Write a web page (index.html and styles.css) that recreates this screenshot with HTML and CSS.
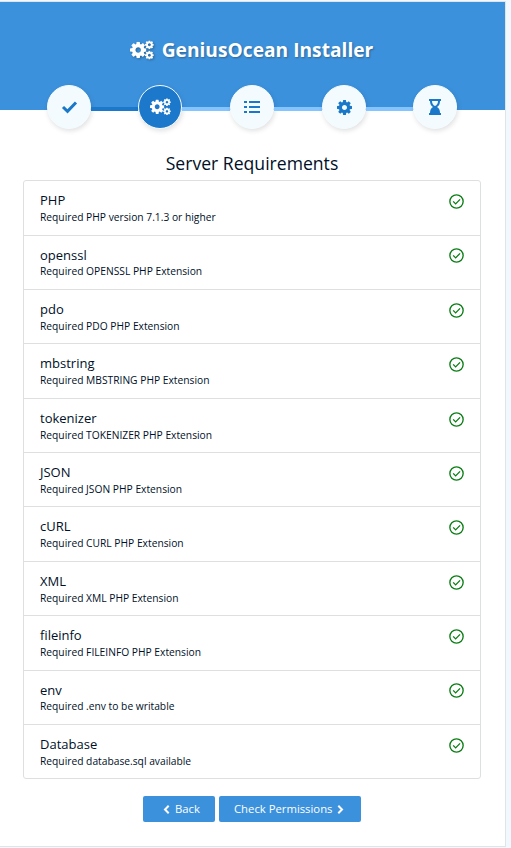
FILE: index.html
```html
<!DOCTYPE html>
<html lang="en">
<head>
<meta charset="utf-8">
<title>GeniusOcean Installer</title>
<link rel="stylesheet" href="styles.css">
</head>
<body>
<svg class="defs" aria-hidden="true">
  <symbol id="cog" viewBox="128 128 1536 1536"><path d="M1152 896q0-106-75-181t-181-75-181 75-75 181 75 181 181 75 181-75 75-181zm512-109v222q0 12-8 23t-20 13l-185 28q-19 54-39 91 35 50 107 138 10 12 10 25t-9 23q-27 37-99 108t-94 71q-12 0-26-9l-138-108q-44 23-91 38-16 136-29 186-7 28-36 28h-222q-14 0-24.500-8.500t-11.500-21.500l-28-184q-49-16-90-37l-141 107q-10 9-25 9-14 0-25-11-126-114-165-168-7-10-7-23 0-12 8-23 15-21 51-66.500t54-70.500q-27-50-41-99l-183-27q-13-2-21-12.500t-8-23.500v-222q0-12 8-23t19-13l186-28q14-46 39-92-40-57-107-138-10-12-10-24 0-10 9-23 26-36 98.500-107.500t94.500-71.500q13 0 26 10l138 107q44-23 91-38 16-136 29-186 7-28 36-28h222q14 0 24.500 8.500t11.500 21.500l28 184q49 16 90 37l142-107q9-9 24-9 13 0 25 10 129 119 165 170 7 8 7 22 0 12-8 23-15 21-51 66.500t-54 70.500q26 50 41 98l183 28q13 2 21 12.500t8 23.500z"/></symbol>
  <symbol id="cogs" viewBox="0 0 24 20">
    <use href="#cog" x="0" y="1.800" width="16.400" height="16.400"/>
    <use href="#cog" x="15" y="0.400" width="8.800" height="8.800"/>
    <use href="#cog" x="15" y="10.800" width="8.800" height="8.800"/>
  </symbol>
  <symbol id="ok" viewBox="0 0 14 14"><circle cx="7" cy="7" r="6.200"/><path d="M3.900 6.900l2.300 2.300 4.100-4.200"/></symbol>
</svg>
<main class="card">
  <header class="header"><svg class="logo"><use href="#cogs"/></svg><h1>GeniusOcean Installer</h1></header>
  <ol class="steps">
    <li class="step"><svg width="17" height="14" viewBox="0 0 17 14"><path d="M2 7l4.500 4.300L15 2.500" fill="none" stroke="currentColor" stroke-width="3"/></svg></li>
    <li class="bar done"></li>
    <li class="step active"><svg width="21" height="17.500"><use href="#cogs"/></svg></li>
    <li class="bar"></li>
    <li class="step"><svg width="16" height="14" viewBox="0 0 16 14"><path d="M0 1h3v2H0zM0 6h3v2H0zM0 11h3v2H0zM5 1h11v2H5zM5 6h11v2H5zM5 11h11v2H5z"/></svg></li>
    <li class="bar"></li>
    <li class="step"><svg width="15" height="15"><use href="#cog"/></svg></li>
    <li class="bar last"></li>
    <li class="step"><svg width="12" height="16" viewBox="0 0 12 16"><path fill-rule="evenodd" d="M0 0h12v2h-1c0 3-1 5-3 6 2 1 3 3 3 6h1v2H0v-2h1c0-3 1-5 3-6C2 7 1 5 1 2H0zM3 2c0 2.500 1 4 3 5 2-1 3-2.500 3-5z"/></svg></li>
  </ol>
  <section class="content">
    <h2>Server Requirements</h2>
    <ul class="list">
      <li><div><h3>PHP</h3><p>Required PHP version 7.1.3 or higher</p></div><svg class="ok"><use href="#ok"/></svg></li>
      <li><div><h3>openssl</h3><p>Required OPENSSL PHP Extension</p></div><svg class="ok"><use href="#ok"/></svg></li>
      <li><div><h3>pdo</h3><p>Required PDO PHP Extension</p></div><svg class="ok"><use href="#ok"/></svg></li>
      <li><div><h3>mbstring</h3><p>Required MBSTRING PHP Extension</p></div><svg class="ok"><use href="#ok"/></svg></li>
      <li><div><h3>tokenizer</h3><p>Required TOKENIZER PHP Extension</p></div><svg class="ok"><use href="#ok"/></svg></li>
      <li><div><h3>JSON</h3><p>Required JSON PHP Extension</p></div><svg class="ok"><use href="#ok"/></svg></li>
      <li><div><h3>cURL</h3><p>Required CURL PHP Extension</p></div><svg class="ok"><use href="#ok"/></svg></li>
      <li><div><h3>XML</h3><p>Required XML PHP Extension</p></div><svg class="ok"><use href="#ok"/></svg></li>
      <li><div><h3>fileinfo</h3><p>Required FILEINFO PHP Extension</p></div><svg class="ok"><use href="#ok"/></svg></li>
      <li><div><h3>env</h3><p>Required .env to be writable</p></div><svg class="ok"><use href="#ok"/></svg></li>
      <li><div><h3>Database</h3><p>Required database.sql available</p></div><svg class="ok"><use href="#ok"/></svg></li>
    </ul>
    <nav class="actions">
      <a class="btn back"><svg width="7" height="9" viewBox="0 0 7 9"><path d="M5.700 .8L2 4.500l3.700 3.700"/></svg><span>Back</span></a>
      <a class="btn next"><span>Check Permissions</span><svg width="7" height="9" viewBox="0 0 7 9"><path d="M1.300 .8L5 4.500 1.300 8.200"/></svg></a>
    </nav>
  </section>
</main>
</body>
</html>
```
FILE: styles.css
```css
* { box-sizing: border-box; }
body {
  margin: 0;
  padding-top: 1px;
  height: 848px;
  overflow: hidden;
  background: #f1f9fe;
  color: #001028;
  font-family: "Open Sans", "Liberation Sans", sans-serif;
}
h1, h2, h3, p, ul, ol { margin: 0; padding: 0; font-weight: 400; }
ul, ol { list-style: none; }
svg { display: block; flex: none; fill: currentColor; }
.defs { width: 0; height: 0; position: absolute; }
.card {
  width: 506px;
  height: 846px;
  background: #fff;
  border: 1px solid #e0e4e6;
  border-left: 0;
}
.header {
  height: 108px;
  padding: 1px 2px 13px 0;
  background: #3c91dc;
  color: #fff;
  display: flex;
  align-items: center;
  justify-content: center;
  gap: 8px;
}
.header h1 {
  font-size: 19.200px;
  line-height: 26px;
  font-weight: 700;
  text-shadow: 1px 1px 2px rgba(0, 0, 0, .3);
}
.logo { width: 24px; height: 20px; filter: drop-shadow(1px 1px 1px rgba(0, 0, 0, .3)); }
.steps {
  position: relative;
  display: flex;
  align-items: center;
  width: 410px;
  height: 44px;
  margin: -25px 0 0 47px;
}
.step {
  width: 44px;
  height: 44px;
  border-radius: 50%;
  background: #f3fbff;
  border: 1px solid #f5fcff;
  color: #1b78c9;
  display: flex;
  align-items: center;
  justify-content: center;
  box-shadow: 1px 2px 5px rgba(0, 0, 0, .12);
}
.step.active { background: #1b78cb; color: #fff; }
.bar { flex: 1; height: 4px; margin-top: 4px; background: #84c4ff; }
.bar.done { flex: 0 0 47px; background: #1b78cb; }
.bar.last { flex: 0 0 47px; }
.content { padding: 22px 24px 0 23px; }
.content h2 {
  font-size: 17.600px;
  line-height: 24px;
  height: 29px;
  text-align: center;
}
.list {
  height: 599px;
  border: 1px solid #dedfe0;
  border-radius: 3px;
  display: grid;
  grid-template-rows: 54.700px repeat(9, 54.360px) 1fr;
}
.list li {
  display: flex;
  justify-content: space-between;
  padding: 11px 16px 0;
  border-bottom: 1px solid #dedfe0;
}
.list li:last-child { border-bottom: 0; }
.list h3 { font-size: 13px; line-height: 16px; }
.list p { font-size: 10.250px; line-height: 14px; margin-top: 1.800px; }
.ok { width: 15px; height: 15px; margin-top: 1.800px; color: #0a7d14; fill: none; stroke: currentColor; stroke-width: 1.250; }
.actions { display: flex; justify-content: center; gap: 4px; margin-top: 17px; }
.btn {
  height: 26px;
  border-radius: 2px;
  background: #3c91dc;
  color: #fff;
  font-size: 11.300px;
  display: flex;
  align-items: center;
}
.btn span { line-height: 16px; padding-bottom: 1px; }
.btn svg { fill: none; stroke: currentColor; stroke-width: 2; }
.back { width: 72px; padding-left: 20px; gap: 5px; }
.next { width: 142px; padding-left: 15px; gap: 5px; }
```
